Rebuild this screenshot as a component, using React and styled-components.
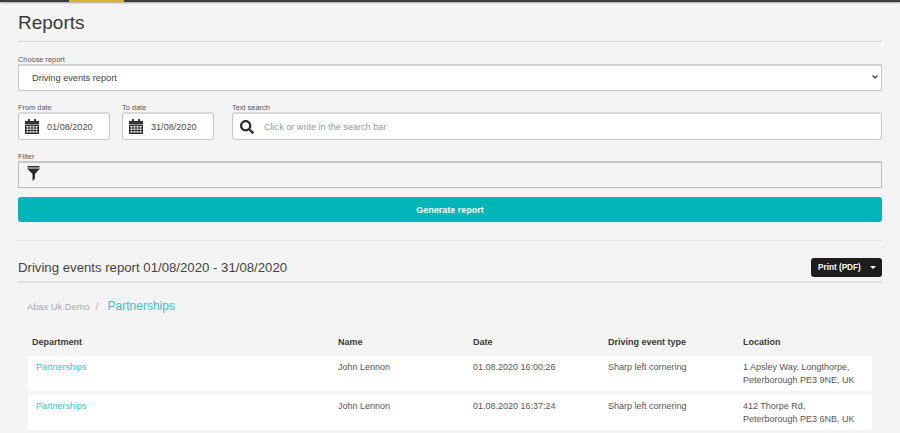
import React from "react";
import styled, { createGlobalStyle } from "styled-components";
import { FaSearch } from "react-icons/fa";

const GlobalStyle = createGlobalStyle`
	html, body {
		margin: 0;
		padding: 0;
		height: 433px;
		overflow: hidden;
		background: #f4f4f4;
		font-family: "Liberation Sans", Arial, sans-serif;
		color: #333;
	}
	* {
		box-sizing: border-box;
	}
`;

const TopBar = styled.div`
	height: 2px;
	background: #3d3d3d;
	box-shadow: 0 1px 2px rgba(0, 0, 0, 0.35);
	display: flex;
	padding-left: 69px;
`;

const TopBarTab = styled.div`
	width: 55px;
	background: #d8b52c;
`;

const Page = styled.div`
	padding: 0 18px;
`;

const PageTitle = styled.h1`
	margin: 0;
	height: 40px;
	padding-top: 9px;
	font-size: 19px;
	line-height: 23px;
	font-weight: 400;
	color: #3a3a3a;
	border-bottom: 1px solid #d8d8d8;
`;

const Field = styled.div`
	display: flex;
	flex-direction: column;
	width: ${(props) => props.width || "auto"};
	flex: ${(props) => (props.grow ? 1 : "none")};
`;

const Label = styled.label`
	font-size: 7.4px;
	line-height: 11px;
	height: 10px;
	color: #555;
`;

const SelectWrap = styled.div`
	position: relative;
`;

const Select = styled.select`
	display: block;
	appearance: none;
	width: 100%;
	height: 27px;
	background: #fff;
	border: 1px solid #c4c4c4;
	border-top-width: 2px;
	border-top-color: #d2d2d2;
	border-radius: 1px;
	padding: 0 0 0 13px;
	font-family: inherit;
	font-size: 9.2px;
	color: #444;
`;

const Chevron = styled.svg`
	position: absolute;
	right: 4px;
	top: 11px;
	pointer-events: none;
`;

const ReportField = styled(Field)`
	margin-top: 12px;
`;

const DateRow = styled.div`
	display: flex;
	margin-top: 11px;
`;

const DateField = styled(Field)`
	margin-right: ${(props) => props.gap}px;
`;

const InputBox = styled.div`
	height: 28px;
	background: #fff;
	border: 1px solid #c8c8c8;
	border-top: 2px solid #d8d8d8;
	border-radius: 3px;
	display: flex;
	align-items: center;
	padding-left: ${(props) => props.pad}px;
	gap: ${(props) => props.space}px;
	font-size: 9.1px;
	color: #4a4a4a;
`;

const Placeholder = styled.span`
	color: #999;
`;

const FilterField = styled(Field)`
	margin-top: 11px;
`;

const FilterBox = styled.div`
	height: 27px;
	background: #f4f4f4;
	border: 1px solid #b8b8b8;
	border-top: 2px solid #c8c8c8;
	border-radius: 1px;
	display: flex;
	align-items: center;
	padding: 0 0 4px 8px;
`;

const GenerateButton = styled.button`
	display: block;
	width: 100%;
	height: 25px;
	margin-top: 9px;
	background: #00b5b8;
	border: none;
	border-radius: 3px;
	color: #fff;
	font-family: inherit;
	font-size: 9px;
	font-weight: 700;
`;

const Divider = styled.div`
	height: 1px;
	margin-top: 18px;
	background: #e6e6e6;
`;

const ReportHeader = styled.div`
	height: 42px;
	display: flex;
	align-items: flex-end;
	justify-content: space-between;
	border-bottom: 2px solid #e2e2e2;
	padding-bottom: 4px;
`;

const ReportTitle = styled.h2`
	margin: 0;
	font-size: 13.2px;
	line-height: 18px;
	font-weight: 400;
	color: #444;
`;

const PrintButton = styled.div`
	width: 71px;
	height: 19px;
	background: #1d1d1d;
	border-radius: 3px;
	color: #fff;
	font-size: 8.2px;
	font-weight: 700;
	display: flex;
	align-items: center;
	justify-content: space-between;
	padding: 0 6px 0 7px;
`;

const Caret = styled.span`
	width: 0;
	height: 0;
	border-left: 3px solid transparent;
	border-right: 3px solid transparent;
	border-top: 3px solid #fff;
`;

const Breadcrumb = styled.div`
	display: flex;
	align-items: baseline;
	height: 20px;
	margin: 16px 0 0 9px;
`;

const CrumbRoot = styled.span`
	font-size: 9.3px;
	color: #aaa;
`;

const CrumbSep = styled.span`
	font-size: 11px;
	color: #bbb;
	margin: 0 9px 0 6px;
`;

const CrumbCurrent = styled.span`
	font-size: 12px;
	color: #3cbfc6;
`;

const Table = styled.div`
	margin: 17px 10px 0;
`;

const Grid = styled.div`
	display: grid;
	grid-template-columns: ${(props) => (props.head ? 306 : 302)}px 135px 135px 135px 1fr;
	padding-left: ${(props) => (props.head ? 4 : 8)}px;
`;

const HeadRow = styled(Grid)`
	height: 20px;
	font-size: 9px;
	line-height: 12px;
	font-weight: 700;
	color: #3a3a3a;
`;

const Row = styled(Grid)`
	height: 35px;
	margin-bottom: 4px;
	padding-top: 5px;
	background: #fff;
	border-radius: 3px;
	font-size: 9px;
	line-height: 13px;
	color: #555;
`;

const DeptLink = styled.a`
	color: #3cbfc6;
`;

function CalendarIcon() {
	return (
		<svg width="14" height="15" viewBox="0 0 14 15" fill="#333">
			<rect x="3" y="0" width="2" height="3" />
			<rect x="9" y="0" width="2" height="3" />
			<path d="M0 2h14v3H0z" />
			<path
				fillRule="evenodd"
				d="M0 5.500h14V15H0zM1.500 7v1.500h2V7zm3 0v1.500h2V7zm3 0v1.500h2V7zm3 0v1.500h2V7zm-9 2.500V11h2V9.500zm3 0V11h2V9.500zm3 0V11h2V9.500zm3 0V11h2V9.500zM1.500 12v1.500h2V12zm3 0v1.500h2V12zm3 0v1.500h2V12zm3 0v1.500h2V12z"
			/>
		</svg>
	);
}

function FilterIcon() {
	return (
		<svg width="13" height="15" viewBox="0 0 13 15" fill="#2b2b2b">
			<rect x="0.500" y="0" width="12" height="1.500" />
			<path d="M0 2.500h13L8 8v4.500L5.500 15V8z" />
		</svg>
	);
}

const rows = [
	{
		date: "01.08.2020 16:00:26",
		street: "1 Apsley Way, Longthorpe,",
		city: "Peterborough PE3 9NE, UK",
	},
	{
		date: "01.08.2020 16:37:24",
		street: "412 Thorpe Rd,",
		city: "Peterborough PE3 6NB, UK",
	},
];

function App() {
	return (
		<>
			<GlobalStyle />
			<TopBar>
				<TopBarTab />
			</TopBar>
			<Page>
				<PageTitle>Reports</PageTitle>
				<ReportField>
					<Label>Choose report</Label>
					<SelectWrap>
						<Select defaultValue="driving">
							<option value="driving">Driving events report</option>
						</Select>
						<Chevron width="6" height="4" viewBox="0 0 6 4" fill="none" stroke="#333" strokeWidth="1.200">
							<path d="M0.500 0.500L3 3l2.500-2.500" />
						</Chevron>
					</SelectWrap>
				</ReportField>
				<DateRow>
					<DateField width="92px" gap={12}>
						<Label>From date</Label>
						<InputBox pad={6} space={8}>
							<CalendarIcon />
							01/08/2020
						</InputBox>
					</DateField>
					<DateField width="92px" gap={18}>
						<Label>To date</Label>
						<InputBox pad={6} space={8}>
							<CalendarIcon />
							31/08/2020
						</InputBox>
					</DateField>
					<Field grow>
						<Label>Text search</Label>
						<InputBox pad={7} space={10}>
							<FaSearch size={14} color="#2b2b2b" />
							<Placeholder>Click or write in the search bar</Placeholder>
						</InputBox>
					</Field>
				</DateRow>
				<FilterField>
					<Label>Filter</Label>
					<FilterBox>
						<FilterIcon />
					</FilterBox>
				</FilterField>
				<GenerateButton>Generate report</GenerateButton>
				<Divider />
				<ReportHeader>
					<ReportTitle>Driving events report 01/08/2020 - 31/08/2020</ReportTitle>
					<PrintButton>
						Print (PDF)
						<Caret />
					</PrintButton>
				</ReportHeader>
				<Breadcrumb>
					<CrumbRoot>Abax Uk Demo</CrumbRoot>
					<CrumbSep>/</CrumbSep>
					<CrumbCurrent>Partnerships</CrumbCurrent>
				</Breadcrumb>
				<Table>
					<HeadRow head>
						<span>Department</span>
						<span>Name</span>
						<span>Date</span>
						<span>Driving event type</span>
						<span>Location</span>
					</HeadRow>
					{rows.map((row) => (
						<Row key={row.date}>
							<div>
								<DeptLink>Partnerships</DeptLink>
							</div>
							<div>John Lennon</div>
							<div>{row.date}</div>
							<div>Sharp left cornering</div>
							<div>
								{row.street}
								<br />
								{row.city}
							</div>
						</Row>
					))}
				</Table>
			</Page>
		</>
	);
}

export default App;
